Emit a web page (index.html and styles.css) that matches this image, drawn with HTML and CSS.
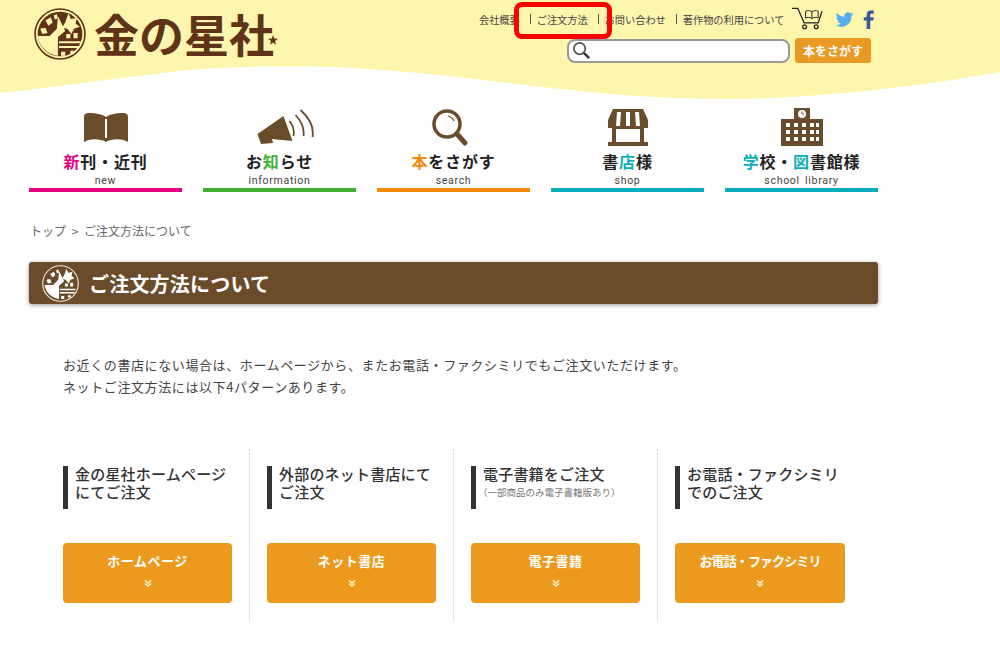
FILE: index.html
```html
<!DOCTYPE html>
<html lang="ja">

<head>
    <meta charset="UTF-8">
    <meta name="viewport" content="width=device-width, initial-scale=1.0">
    <title>金の星社 - ご注文方法について</title>
    <link rel="stylesheet" href="styles.css">
</head>

<body>
    <header class="header">
        <svg class="header-wave" viewBox="0 0 1000 100" preserveAspectRatio="none">
            <path d="M0 0H1000V72C900 90 800 99 720 99C620 99 520 84 440 75C410 72 375 69 333 67C300 66 260 66 220 68C195 69 170 72 147 75C100 80 50 88 0 93Z" fill="#fff6ae"/>
        </svg>

        <a class="logo" href="#">
            <svg class="logo-mark" viewBox="0 0 50 50">
                <circle cx="25" cy="25" r="24" fill="none" stroke="#5e3318" stroke-width="1.5"/>
                <circle cx="25" cy="25" r="21.5" fill="#5e3318"/>
                <path d="M23 8L30 22L23 28L23 46C17 45 11 42 7 36C5 33 4 30 3.5 27L15 27L22 20Z" fill="#fff6ae"/>
                <path d="M33 5L35.5 10.5L41 9.5L40 15L44 18L38.5 20L36 25L32 20L27 19L30 14Z" fill="#fff6ae"/>
                <path d="M24 32H45V34H24ZM24 36.5H44V38.5H24Z" fill="#fff6ae"/>
                <path d="M31 25H35V29H31ZM38 24H42V29H38ZM26 42H30V46H26ZM35 41H39V44H35Z" fill="#fff6ae"/>
                <path d="M6 20L11 19L13 24L8 25ZM11 12L16 9L18 14L14 17ZM19 7L22 6L23 10L20 11Z" fill="#fff6ae"/>
            </svg>
            <span class="logo-text">金の星社</span>
            <svg class="logo-star" viewBox="-1 -1 12 12">
                <path d="M5 0L6.2 3.6L10 3.7L7 6L8.1 9.7L5 7.5L1.9 9.7L3 6L0 3.7L3.8 3.6Z" fill="#5e3318" stroke="#fff6ae" stroke-width="1" paint-order="stroke"/>
            </svg>
        </a>

        <div class="header-tools">
            <div class="top-links">
                <a href="#" class="top-link">会社概要</a>
                <a href="#" class="top-link">ご注文方法</a>
                <a href="#" class="top-link">お問い合わせ</a>
                <a href="#" class="top-link">著作物の利用について</a>
                <svg class="cart-icon" viewBox="0 0 32 24">
                    <path d="M0 1H6L12.5 16H27L31 4" fill="none" stroke="#222" stroke-width="1.3"/>
                    <path d="M14 4C16 3 18 3 20.5 4.5C23 3 25 3 27 4V11C25 10 23 10 20.5 11.5C18 10 16 10 14 11ZM20.5 4.5V11.5" fill="none" stroke="#222" stroke-width="1"/>
                    <circle cx="13" cy="20" r="2" fill="none" stroke="#222" stroke-width="1.3"/>
                    <circle cx="25" cy="20" r="2" fill="none" stroke="#222" stroke-width="1.3"/>
                </svg>
                <svg class="twitter-icon" viewBox="0 0 24 24">
                    <path d="M23 5c-.8.4-1.7.6-2.6.7.9-.6 1.7-1.4 2-2.5-.9.5-1.9.9-2.9 1.1A4.6 4.6 0 0 0 11.700 8.500C7.900 8.300 4.500 6.500 2.300 3.700c-1.200 2.100-.6 4.800 1.400 6.200-.7 0-1.400-.2-2.100-.6 0 2.200 1.600 4.200 3.700 4.600-.7.2-1.400.2-2.100.1.6 1.900 2.300 3.200 4.300 3.200A9.300 9.300 0 0 1 .7 19.100 13 13 0 0 0 20.800 7.600c.9-.7 1.600-1.600 2.200-2.600z" fill="#55acee"/>
                </svg>
                <svg class="facebook-icon" viewBox="0 0 12 20">
                    <path d="M3.5 20V11H.5V7.5H3.5V5C3.5 2 5.3.5 8 .5H11V4H9C7.8 4 7.3 4.5 7.3 5.6V7.5H11L10.5 11H7.3V20Z" fill="#3b5998"/>
                </svg>
            </div>
            <form class="search-row">
                <div class="search-box">
                    <svg class="search-icon" viewBox="0 0 20 20">
                        <circle cx="8" cy="8" r="6" fill="#fff" stroke="#555" stroke-width="1.8"/>
                        <path d="M12.5 12.5L18 18" stroke="#333" stroke-width="2.5"/>
                    </svg>
                </div>
                <button type="button" class="search-button">本をさがす</button>
            </form>
        </div>

        <div class="highlight"></div>
    </header>

    <nav class="nav">
        <a href="#" class="nav-item nav-new">
            <svg class="nav-icon" viewBox="0 0 50 40">
                <path d="M3 9C3 6 5 5 8 5C14 5 21 6 25 9C29 6 36 5 42 5C45 5 47 6 47 9V34C40 30 30 31 25 34C20 31 10 30 3 34Z" fill="#6a4c2b"/>
                <path d="M24 11H26V30H24Z" fill="#fff"/>
            </svg>
            <span class="nav-label"><em>新</em>刊・近刊</span>
            <span class="nav-sub">new</span>
        </a>
        <a href="#" class="nav-item nav-info">
            <svg class="nav-icon" viewBox="0 0 70 40">
                <path d="M12.5 26L38.5 8L47.5 33L27 31L28 35L16 36Z" fill="#6a4c2b"/>
                <path d="M44.5 13Q50 20 48.5 28M50.5 7Q60 17 58.5 28M55.5 2Q70 15 67.5 29" fill="none" stroke="#6a4c2b" stroke-width="1.8"/>
            </svg>
            <span class="nav-label">お<em>知</em>らせ</span>
            <span class="nav-sub">information</span>
        </a>
        <a href="#" class="nav-item nav-search">
            <svg class="nav-icon" viewBox="0 0 70 40">
                <circle cx="28" cy="16" r="13" fill="none" stroke="#6a4c2b" stroke-width="3.5"/>
                <path d="M38 26L46 35" stroke="#6a4c2b" stroke-width="5" stroke-linecap="round"/>
                <path d="M29 8C32 9 34 10 35 13" fill="none" stroke="#6a4c2b" stroke-width="1.2"/>
            </svg>
            <span class="nav-label"><em>本</em>をさがす</span>
            <span class="nav-sub">search</span>
        </a>
        <a href="#" class="nav-item nav-shop">
            <svg class="nav-icon" viewBox="0 0 44 40">
                <path d="M7 1H37L42 12V20H38V34H42V38H2V34H6V20H2V12Z" fill="#6a4c2b"/>
                <path d="M10 21H34V34H10Z" fill="#fff"/>
                <path d="M11 4H15L14 18H10ZM20 4H24V18H20ZM29 4H33L34 18H30Z" fill="#fff"/>
            </svg>
            <span class="nav-label">書<em>店</em>様</span>
            <span class="nav-sub">shop</span>
        </a>
        <a href="#" class="nav-item nav-school">
            <svg class="nav-icon" viewBox="0 0 44 40">
                <path d="M14 0H30V11H43V38H1V11H14Z" fill="#6a4c2b"/>
                <circle cx="22" cy="6" r="4" fill="#fff"/>
                <path d="M22 3.5V6H24" fill="none" stroke="#6a4c2b" stroke-width="1"/>
                <path d="M6 15h4v4h-4zM14 15h4v4h-4zM22 15h4v4h-4zM30 15h4v4h-4zM36 15h3v4h-3zM6 22h4v4h-4zM14 22h4v4h-4zM22 22h4v4h-4zM30 22h4v4h-4zM36 22h3v4h-3zM6 29h4v4h-4zM14 29h4v4h-4zM22 29h4v4h-4zM30 29h4v4h-4zM36 29h3v4h-3z" fill="#fff"/>
            </svg>
            <span class="nav-label"><em>学</em>校・<em>図</em>書館様</span>
            <span class="nav-sub">school library</span>
        </a>
    </nav>

    <main class="main">
        <p class="breadcrumb">トップ &gt; ご注文方法について</p>

        <h1 class="page-title">
            <svg class="title-mark" viewBox="0 0 50 50">
                <circle cx="25" cy="25" r="24" fill="none" stroke="#efe6d8" stroke-width="1.5"/>
                <circle cx="25" cy="25" r="21.5" fill="#6a4c2b"/>
                <path d="M23 8L30 22L23 28L23 46C17 45 11 42 7 36C5 33 4 30 3.5 27L15 27L22 20Z" fill="#fff"/>
                <path d="M33 5L35.5 10.5L41 9.5L40 15L44 18L38.5 20L36 25L32 20L27 19L30 14Z" fill="#fff"/>
                <path d="M24 32H45V34H24ZM24 36.5H44V38.5H24Z" fill="#fff"/>
                <path d="M31 25H35V29H31ZM38 24H42V29H38ZM26 42H30V46H26ZM35 41H39V44H35Z" fill="#fff"/>
                <path d="M6 20L11 19L13 24L8 25ZM11 12L16 9L18 14L14 17ZM19 7L22 6L23 10L20 11Z" fill="#fff"/>
            </svg>
            ご注文方法について
        </h1>

        <p class="intro">お近くの書店にない場合は、ホームページから、またお電話・ファクシミリでもご注文いただけます。<br>ネットご注文方法には以下4パターンあります。</p>

        <div class="order-list">
            <section class="order-col">
                <h2 class="order-heading">金の星社ホームページにてご注文</h2>
                <a href="#" class="order-button">ホームページ
                    <svg class="chevrons" viewBox="0 0 8 7"><path d="M1 .5L4 3L7 .5M1 3.5L4 6L7 3.5" fill="none" stroke="#fff3d0" stroke-width="1.5"/></svg>
                </a>
            </section>
            <section class="order-col">
                <h2 class="order-heading">外部のネット書店にてご注文</h2>
                <a href="#" class="order-button">ネット書店
                    <svg class="chevrons" viewBox="0 0 8 7"><path d="M1 .5L4 3L7 .5M1 3.5L4 6L7 3.5" fill="none" stroke="#fff3d0" stroke-width="1.5"/></svg>
                </a>
            </section>
            <section class="order-col">
                <h2 class="order-heading">電子書籍をご注文<small>（一部商品のみ電子書籍版あり）</small></h2>
                <a href="#" class="order-button">電子書籍
                    <svg class="chevrons" viewBox="0 0 8 7"><path d="M1 .5L4 3L7 .5M1 3.5L4 6L7 3.5" fill="none" stroke="#fff3d0" stroke-width="1.5"/></svg>
                </a>
            </section>
            <section class="order-col">
                <h2 class="order-heading">お電話・ファクシミリでのご注文</h2>
                <a href="#" class="order-button order-button-long">お電話・ファクシミリ
                    <svg class="chevrons" viewBox="0 0 8 7"><path d="M1 .5L4 3L7 .5M1 3.5L4 6L7 3.5" fill="none" stroke="#fff3d0" stroke-width="1.5"/></svg>
                </a>
            </section>
        </div>
    </main>
</body>

</html>
```

FILE: styles.css
```css
body {
    font-family: "Noto Sans CJK JP", "Liberation Sans", sans-serif;
    margin: 0;
    padding: 0;
    background-color: #fff;
    color: #333;
    overflow-x: hidden;
}

a {
    text-decoration: none;
    color: inherit;
}

/* header */
.header {
    position: relative;
    display: flex;
    justify-content: space-between;
    height: 100px;
    padding-left: 34px;
}

.header-wave {
    position: absolute;
    top: 0;
    left: 0;
    width: 100%;
    height: 100px;
}

.logo {
    position: relative;
    display: flex;
    align-items: center;
    align-self: flex-start;
    gap: 8px;
    height: 68px;
    color: #5e3318;
}

.logo-mark {
    width: 52px;
    height: 52px;
}

.logo-text {
    font-size: 45px;
    font-weight: 700;
    line-height: 1;
    white-space: nowrap;
    position: relative;
    top: -1px;
}

/* 社の右下に重なる星 */
.logo-star {
    position: relative;
    width: 12px;
    height: 12px;
    margin-left: -15px;
    margin-top: 12px;
}

.header-tools {
    position: relative;
    width: 521px;
}

.top-links {
    display: flex;
    align-items: center;
    height: 38px;
    font-size: 10.2px;
    color: #444;
}

.top-link {
    white-space: nowrap;
}

.top-link + .top-link {
    margin-left: 10px;
    padding-left: 7px;
    background: linear-gradient(#555, #555) left center / 1px 10px no-repeat;
}

.cart-icon {
    width: 31px;
    height: 24px;
    margin-left: 8px;
}

.twitter-icon {
    width: 19px;
    height: 19px;
    margin-left: 12px;
}

.facebook-icon {
    width: 12px;
    height: 19px;
    margin-left: 9px;
}

.search-row {
    display: flex;
    align-items: center;
    gap: 5px;
    margin: 0 0 0 88px;
}

.search-box {
    display: flex;
    align-items: center;
    box-sizing: border-box;
    width: 223px;
    height: 24px;
    padding-left: 3px;
    background-color: #fff;
    border: 2px solid #999;
    border-radius: 8px;
}

.search-icon {
    width: 19px;
    height: 19px;
}

.search-button {
    width: 76px;
    height: 25px;
    padding: 0;
    background-color: #e89a24;
    color: #fff;
    border: none;
    border-radius: 3px;
    font-family: inherit;
    font-size: 12px;
    font-weight: 700;
}

.highlight {
    position: absolute;
    top: 2px;
    left: 514px;
    width: 88px;
    height: 27px;
    border: 5px solid #f00;
    border-radius: 8px;
}

/* nav */
.nav {
    display: flex;
    gap: 21px;
    width: 849px;
    height: 84px;
    margin-top: 8px;
    margin-left: 29px;
}

.nav-item {
    display: flex;
    flex: 0 0 153px;
    flex-direction: column;
    align-items: center;
    box-sizing: border-box;
    height: 84px;
    border-bottom: 4px solid;
    color: #222;
}

.nav-icon {
    flex: none;
    width: 70px;
    height: 40px;
}

.nav-label {
    margin-top: 3px;
    font-size: 16px;
    font-weight: 700;
    line-height: 20px;
    letter-spacing: 0.8px;
    white-space: nowrap;
}

.nav-label em {
    font-style: normal;
}

.nav-sub {
    margin-top: 1px;
    font-family: Roboto, sans-serif;
    font-size: 10.5px;
    line-height: 18px;
    letter-spacing: 0.7px;
    word-spacing: 2px;
    color: #444;
}

.nav-new {
    border-color: #e6007f;
}

.nav-new em {
    color: #e6007f;
}

.nav-info {
    border-color: #43b033;
}

.nav-info em {
    color: #43b033;
}

.nav-search {
    border-color: #f28a0c;
}

.nav-search em {
    color: #f28a0c;
}

.nav-shop,
.nav-school {
    border-color: #0aaebb;
}

.nav-shop em,
.nav-school em {
    color: #0aaebb;
}

/* main */
.main {
    width: 849px;
    margin-left: 29px;
}

.breadcrumb {
    margin: 30px 0 0 1px;
    font-size: 12px;
    line-height: 18px;
    word-spacing: 3px;
    color: #666;
}

.page-title {
    display: flex;
    align-items: center;
    gap: 10px;
    height: 42px;
    margin: 22px 0 0;
    padding-left: 13px;
    background-color: #6a4c2b;
    color: #fff;
    border-radius: 3px;
    box-shadow: 0 1px 4px rgba(0, 0, 0, 0.4);
    font-size: 20px;
    font-weight: 700;
    letter-spacing: 0.2px;
}

.title-mark {
    width: 37px;
    height: 37px;
}

.intro {
    margin: 50px 0 0 34px;
    font-size: 13px;
    line-height: 22px;
    letter-spacing: 0.6px;
    color: #444;
}

.order-list {
    display: flex;
    margin: 51px 0 0 17px;
}

.order-col {
    box-sizing: border-box;
    width: 204px;
    height: 172px;
    padding: 16px 17px 0;
    border-right: 1px dotted #ccc;
}

.order-col:last-child {
    border-right: none;
}

.order-heading {
    box-sizing: border-box;
    height: 44px;
    margin: 0;
    padding-left: 12px;
    background: linear-gradient(#333, #333) 0 1px / 5px 43px no-repeat;
    font-size: 15px;
    font-weight: 500;
    line-height: 18px;
    letter-spacing: 0.2px;
    color: #333;
}

.order-heading small {
    display: block;
    margin-left: -5px;
    font-size: 9.5px;
    font-weight: 400;
    letter-spacing: 0;
    color: #777;
}

.order-button {
    display: flex;
    flex-direction: column;
    align-items: center;
    box-sizing: border-box;
    height: 60px;
    margin-top: 34px;
    padding-top: 8px;
    background-color: #ec9a1e;
    color: #fff;
    border-radius: 4px;
    font-size: 13px;
    font-weight: 700;
    line-height: 20px;
    letter-spacing: 0.5px;
}

.order-button-long {
    letter-spacing: -0.9px;
}

.chevrons {
    width: 8px;
    height: 7px;
    margin-top: 9px;
}
```
